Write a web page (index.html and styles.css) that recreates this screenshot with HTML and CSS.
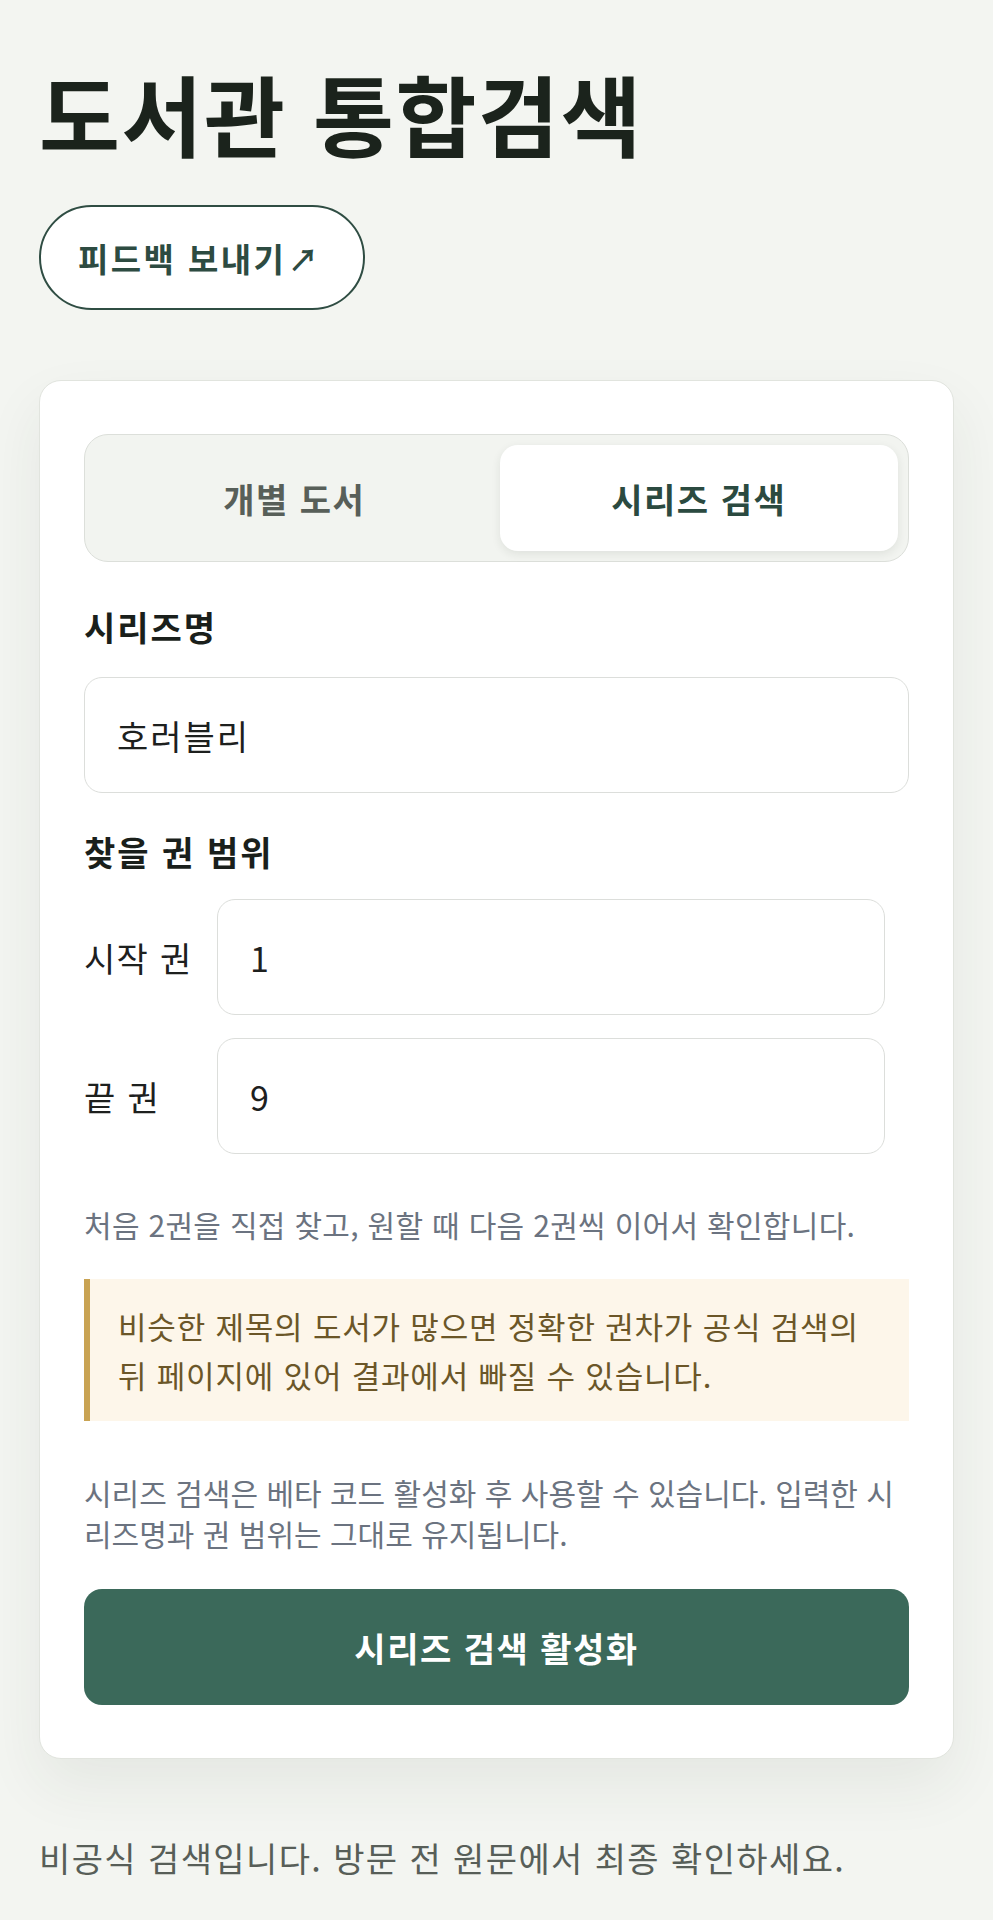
FILE: index.html
```html
<!DOCTYPE html>
<html lang="ko">
<head>
<meta charset="utf-8">
<title>도서관 통합검색</title>
<link rel="stylesheet" href="styles.css">
</head>
<body>
<main class="page">
  <h1 class="title">도서관 통합검색</h1>
  <a class="feedback" href="#">피드백 보내기<span class="arrow">↗</span></a>

  <section class="card">
    <div class="tabs">
      <button class="tab">개별 도서</button>
      <button class="tab active">시리즈 검색</button>
    </div>

    <label class="label">시리즈명</label>
    <div class="input">호러블리</div>

    <div class="label label-range">찾을 권 범위</div>
    <div class="range">
      <div class="range-row">
        <span class="range-label">시작 권</span>
        <div class="input">1</div>
      </div>
      <div class="range-row">
        <span class="range-label">끝 권</span>
        <div class="input">9</div>
      </div>
    </div>

    <p class="hint">처음 2권을 직접 찾고, 원할 때 다음 2권씩 이어서 확인합니다.</p>

    <div class="warning">비슷한 제목의 도서가 많으면 정확한 권차가 공식 검색의<br>뒤 페이지에 있어 결과에서 빠질 수 있습니다.</div>

    <p class="beta">시리즈 검색은 베타 코드 활성화 후 사용할 수 있습니다. 입력한 시리즈명과 권 범위는 그대로 유지됩니다.</p>

    <button class="primary">시리즈 검색 활성화</button>
  </section>

  <p class="footer">비공식 검색입니다. 방문 전 원문에서 최종 확인하세요.</p>
</main>
</body>
</html>
```

FILE: styles.css
```css
* { box-sizing: border-box; }

html, body {
  margin: 0;
  padding: 0;
  background: #f3f5f1;
}

body {
  font-family: "Noto Sans CJK KR", "Noto Sans", sans-serif;
  color: #1c221d;
}

.page {
  padding: 60px 39px 40px;
}

.title {
  margin: 0;
  font-size: 88px;
  line-height: 104px;
  font-weight: 700;
  letter-spacing: 1.6px;
  color: #1b231c;
}

.feedback {
  margin-top: 41px;
  display: inline-flex;
  align-items: center;
  height: 105px;
  padding: 0 42px 0 37px;
  border: 2px solid #2f4d43;
  border-radius: 999px;
  background: #ffffff;
  color: #2d4b41;
  font-size: 33px;
  font-weight: 700;
  text-decoration: none;
  letter-spacing: 2.4px;
}

.arrow {
  margin-left: 2px;
  font-weight: 700;
  font-size: 30px;
}

.card {
  margin-top: 70px;
  background: #ffffff;
  border: 1px solid #e1e4de;
  border-radius: 22px;
  padding: 53px 44px 53px;
  box-shadow: 0 26px 60px rgba(40, 50, 40, 0.07);
}

.tabs {
  display: grid;
  grid-template-columns: 1fr 1fr;
  gap: 6px;
  padding: 10px;
  height: 128px;
  background: #f2f4f0;
  border: 1px solid #dcdfda;
  border-radius: 24px;
}

.tab {
  border: 0;
  border-radius: 18px;
  background: transparent;
  font-family: inherit;
  font-size: 34px;
  font-weight: 700;
  letter-spacing: 1.5px;
  color: #585f59;
}

.tab.active {
  background: #ffffff;
  color: #2b4a40;
  box-shadow: 0 3px 10px rgba(30, 40, 30, 0.09);
}

.label {
  display: block;
  margin-top: 42px;
  margin-bottom: 27px;
  font-size: 34px;
  line-height: 46px;
  font-weight: 700;
  letter-spacing: 2px;
  color: #1a1f1b;
}

.label-range {
  margin-top: 36px;
  margin-bottom: 24px;
}

.input {
  display: flex;
  align-items: center;
  height: 116px;
  padding: 0 32px;
  border: 1.5px solid #dcdedb;
  border-radius: 18px;
  background: #ffffff;
  font-size: 34px;
  letter-spacing: 2px;
  color: #1d201e;
}

.range {
  display: flex;
  flex-direction: column;
  gap: 23px;
  padding-right: 24px;
}

.range-row {
  display: grid;
  grid-template-columns: 109px 1fr;
  gap: 24px;
  align-items: center;
}

.range-label {
  font-size: 34px;
  letter-spacing: 1.3px;
  color: #1d201e;
  white-space: nowrap;
}

.hint {
  margin: 50px 0 0;
  font-size: 30px;
  line-height: 41px;
  letter-spacing: 0.3px;
  color: #6b7380;
}

.warning {
  margin-top: 34px;
  padding: 22px 30px 22px 28px;
  background: #fdf6ea;
  border-left: 6px solid #c9a353;
  font-size: 31px;
  line-height: 49px;
  letter-spacing: 0.8px;
  color: #6b5628;
}

.beta {
  margin: 51px 0 0;
  font-size: 30px;
  line-height: 41px;
  letter-spacing: 0;
  color: #6b7380;
}

.primary {
  display: block;
  width: 100%;
  height: 116px;
  margin-top: 35px;
  border: 0;
  border-radius: 18px;
  background: #3b695a;
  color: #ffffff;
  font-family: inherit;
  font-size: 34px;
  font-weight: 700;
  letter-spacing: 1.5px;
}

.footer {
  margin: 76px 0 0;
  font-size: 34px;
  line-height: 46px;
  letter-spacing: 1.4px;
  color: #575e58;
}
```
